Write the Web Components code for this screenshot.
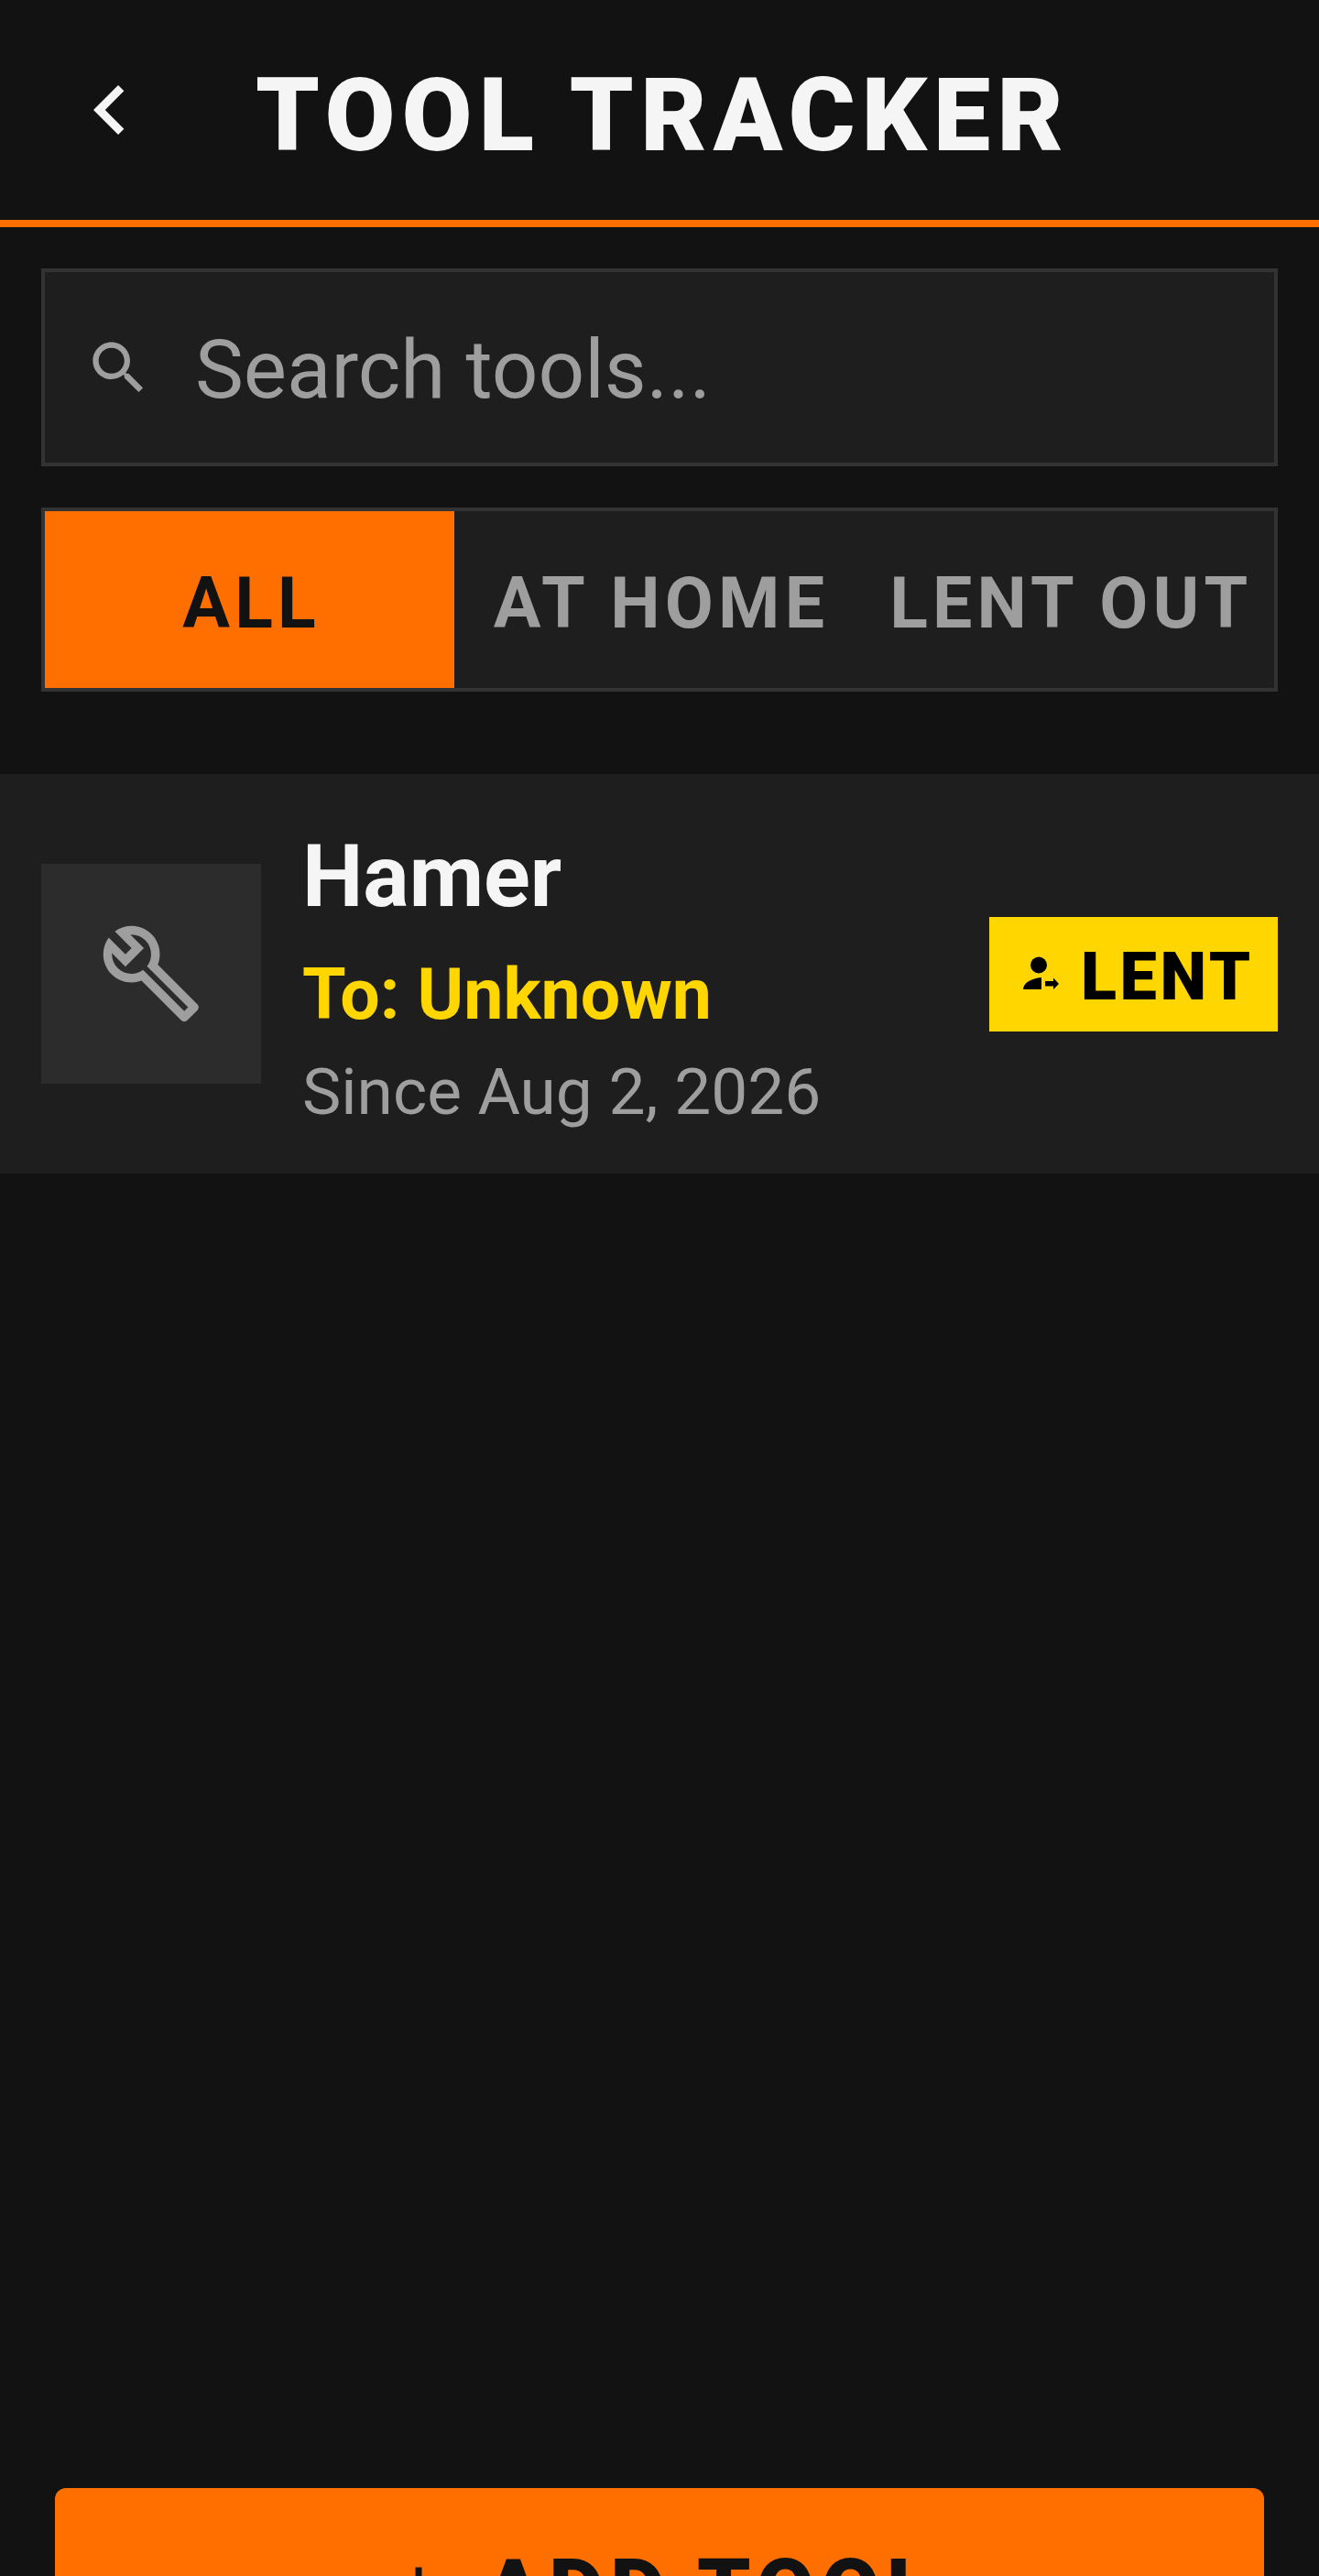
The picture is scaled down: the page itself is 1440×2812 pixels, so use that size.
<!DOCTYPE html>
<html lang="en">
<head>
<meta charset="utf-8">
<title>Tool Tracker</title>
<style>
html,body{margin:0;padding:0;background:#121212;}
body{font-family:Roboto,"Liberation Sans",sans-serif;color:#f5f5f5;}
</style>
</head>
<body>
<tool-app>
  <app-header title-text="TOOL TRACKER"></app-header>
  <search-box placeholder="Search tools..."></search-box>
  <filter-tabs>
    <filter-tab active>ALL</filter-tab>
    <filter-tab>AT HOME</filter-tab>
    <filter-tab>LENT OUT</filter-tab>
  </filter-tabs>
  <tool-list>
    <tool-card name="Hamer" borrower="To: Unknown" since="Since Aug 2, 2026"></tool-card>
  </tool-list>
  <add-button>ADD TOOL</add-button>
</tool-app>
<script>
function def(name, html){
  customElements.define(name, class extends HTMLElement{
    constructor(){super();this.attachShadow({mode:'open'});}
    connectedCallback(){
      this.shadowRoot.innerHTML = typeof html==='function'?html(this):html;
    }
  });
}
def('tool-app',`<style>
:host{display:flex;flex-direction:column;width:1440px;height:2812px;overflow:hidden;background:#121212;font-family:Roboto,"Liberation Sans",sans-serif;}
</style><slot></slot>`);

def('app-header',h=>`<style>
:host{display:flex;flex:none;box-sizing:border-box;height:248px;align-items:center;padding-left:66px;border-bottom:8px solid #ff6f00;background:#121212;}
svg{width:108px;height:108px;flex:none;fill:#f5f5f5;}
h1{margin:0 0 0 105px;font-size:111px;line-height:120px;font-weight:900;letter-spacing:7.3px;color:#f5f5f5;white-space:nowrap;padding-top:12px;}
</style>
<svg viewBox="0 0 24 24"><path d="M15.41 7.41L14 6l-6 6 6 6 1.41-1.41L10.83 12z"/></svg>
<h1>${h.getAttribute('title-text')}</h1>`);

def('search-box',h=>`<style>
:host{display:flex;flex:none;box-sizing:border-box;height:216px;margin:45px 45px 0;align-items:center;padding-left:43px;background:#1e1e1e;border:4px solid #333;}
svg{width:75px;height:75px;flex:none;fill:#9e9e9e;}
span{margin-left:46px;padding-top:5px;font-size:89px;line-height:100px;color:#9e9e9e;white-space:nowrap;}
</style>
<svg viewBox="0 0 24 24"><path d="M15.5 14h-.79l-.28-.27C15.41 12.59 16 11.11 16 9.5 16 5.91 13.09 3 9.5 3S3 5.91 3 9.5 5.91 16 9.5 16c1.61 0 3.09-.59 4.23-1.57l.27.28v.79l5 4.99L20.49 19l-4.99-5zm-6 0C7.01 14 5 11.99 5 9.5S7.01 5 9.5 5 14 7.01 14 9.5 11.99 14 9.5 14z"/></svg>
<span>${h.getAttribute('placeholder')}</span>`);

def('filter-tabs',`<style>
:host{display:grid;grid-template-columns:repeat(3,1fr);flex:none;box-sizing:border-box;height:201px;margin:45px 45px 0;background:#1e1e1e;border:4px solid #333;}
</style><slot></slot>`);

def('filter-tab',h=>`<style>
:host{display:flex;align-items:center;justify-content:center;box-sizing:border-box;padding:8px 0 0 4px;min-width:0;white-space:nowrap;font-size:77px;line-height:90px;font-weight:700;letter-spacing:5.200px;color:#9e9e9e;}
:host([active]){background:#ff6f00;color:#121212;}
</style><slot></slot>`);

def('tool-list',`<style>
:host{display:block;flex:1;min-height:0;padding-top:90px;}
</style><slot></slot>`);

def('tool-card',h=>`<style>
:host{display:flex;box-sizing:border-box;height:436px;align-items:center;padding:0 45px;background:#1e1e1e;}
.thumb{display:flex;align-items:center;justify-content:center;width:240px;height:240px;flex:none;background:#2c2c2c;}
.thumb svg{width:114px;height:114px;fill:#9e9e9e;}
.info{flex:1;min-width:0;margin-left:45px;padding-top:12px;display:flex;flex-direction:column;}
.name{font-size:94px;line-height:106px;font-weight:700;color:#f5f5f5;}
.to{font-size:77px;line-height:84px;font-weight:700;color:#ffd600;margin-top:34px;}
.since{font-size:71.200px;line-height:84px;color:#9e9e9e;margin-top:22px;}
.badge{display:flex;align-items:center;box-sizing:border-box;flex:none;width:315px;height:125px;padding-left:36px;background:#ffd600;color:#000;font-size:72px;line-height:84px;font-weight:900;letter-spacing:3.600px;}
.badge svg{width:42px;height:42px;flex:none;}
.badge span{margin-left:22px;padding-top:8px;}
</style>
<div class="thumb"><svg viewBox="0 0 24 24"><path d="M22.61 18.99l-9.08-9.08c.93-2.34.45-5.1-1.44-7C9.79.61 6.21.4 3.66 2.26L7.5 6.11 6.08 7.52 2.25 3.69C.39 6.23.6 9.82 2.9 12.11c1.86 1.86 4.57 2.35 6.89 1.48l9.11 9.11c.39.39 1.02.39 1.41 0l2.3-2.3c.4-.38.4-1.01 0-1.41zm-3 1.6l-9.46-9.46c-.61.45-1.29.72-2 .82-1.36.2-2.79-.21-3.83-1.25C3.37 9.76 2.93 8.5 3 7.26l3.09 3.09 4.24-4.24-3.09-3.09c1.24-.07 2.49.37 3.44 1.31 1.08 1.08 1.49 2.57 1.24 3.96-.12.71-.42 1.37-.88 1.96l9.45 9.45-.88.88z"/></svg></div>
<div class="info">
<div class="name">${h.getAttribute('name')}</div>
<div class="to">${h.getAttribute('borrower')}</div>
<div class="since">${h.getAttribute('since')}</div>
</div>
<div class="badge"><svg viewBox="0 0 42 42"><circle cx="18" cy="11.500" r="9"/><path d="M1 38C1 31 10 26 21 25L21 38Z"/><path d="M25 29H34V25.500L40 32 34 38V34.500H25Z"/></svg><span>LENT</span></div>`);

def('add-button',`<style>
:host{display:block;flex:none;height:96px;overflow:hidden;padding:0 60px;}
div{display:flex;align-items:center;justify-content:center;box-sizing:border-box;height:222px;background:#ff6f00;border-radius:12px;color:#121212;font-size:93px;font-weight:900;letter-spacing:7px;}
svg{width:84px;height:84px;flex:none;fill:#121212;margin-right:30px;}
</style><div><svg viewBox="0 0 24 24"><path d="M19 13h-6v6h-2v-6H5v-2h6V5h2v6h6z"/></svg><slot></slot></div>`);
</script>
</body>
</html>
